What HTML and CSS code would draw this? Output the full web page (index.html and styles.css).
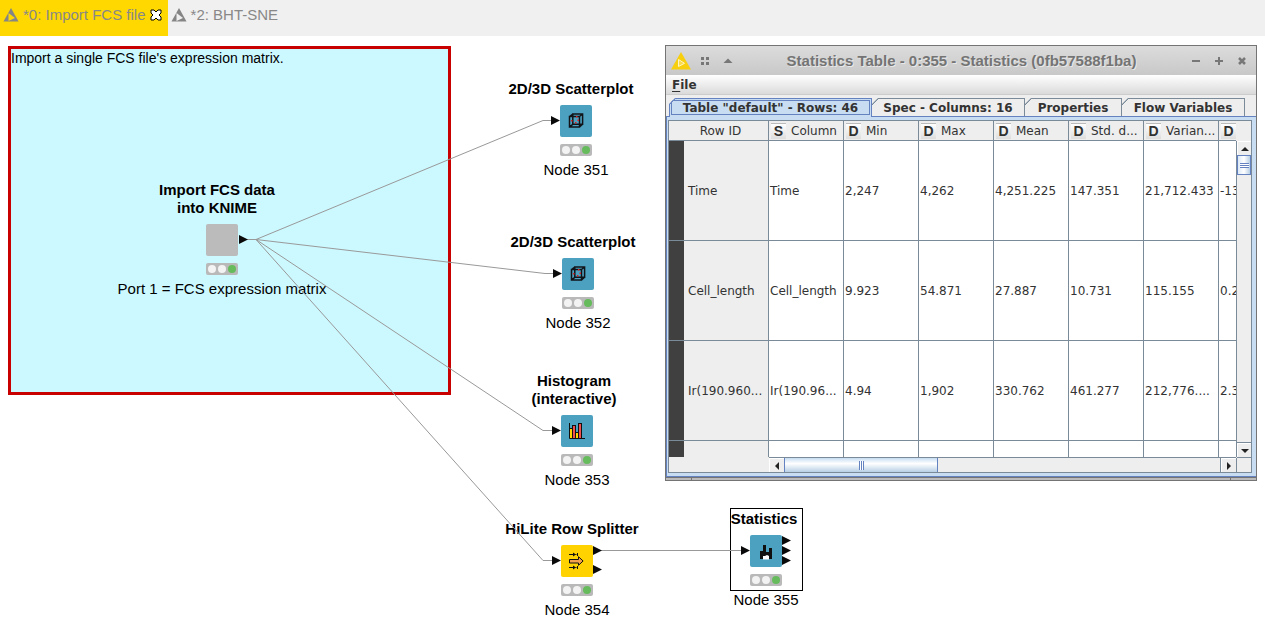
FILE: index.html
```html
<!DOCTYPE html>
<html lang="en">
<head>
<meta charset="utf-8">
<title>Import FCS file</title>
<link rel="stylesheet" href="styles.css">
</head>
<body>
<svg class="defs" aria-hidden="true">
  <symbol id="knime" viewBox="0 0 16 14"><path d="M8 0 15.5 13.5H.5Z" fill="#858585"/><path d="M5.500 5v8l6.500-3z" fill="var(--hole)"/></symbol>
  <symbol id="cube" viewBox="0 0 32 32"><path d="M9.5 11.5h10v10.5h-10zM12.8 9h9.8v10.3h-9.8zM9.5 11.5 12.8 9M19.5 11.5 22.6 9M19.5 22l3.1-2.7M9.5 22l3.3-2.7" fill="none" stroke="#101418" stroke-width="1.500"/><g fill="#e02020"><rect x="11" y="15" width="1.5" height="1.5"/><rect x="15" y="17" width="1.5" height="1.5"/><rect x="17.5" y="14.5" width="1.5" height="1.5"/><rect x="16" y="11" width="1.5" height="1.5"/></g></symbol>
</svg>
<header class="editor-tabs">
  <button class="editor-tab current"><svg class="tab-icon"><use href="#knime"/></svg>*0: Import FCS file
    <svg class="tab-close" viewBox="0 0 12 12"><path d="M1 1h3l2 2 2-2h3v3L9 6l2 2v3H8L6 9l-2 2H1V8l2-2-2-2z" fill="#fff" stroke="#000"/></svg></button>
  <button class="editor-tab"><svg class="tab-icon"><use href="#knime"/></svg>*2: BHT-SNE</button>
</header>
<main class="canvas">
  <div class="annotation">Import a single FCS file's expression matrix.</div>

  <section class="node n-import">
    <h2>Import FCS data<br>into KNIME</h2>
    <div class="body meta"></div>
    <div class="lights"><i></i><i></i><i></i></div>
    <p>Port 1 = FCS expression matrix</p>
  </section>
  <section class="node n351">
    <h2>2D/3D Scatterplot</h2>
    <div class="body"><svg><use href="#cube"/></svg></div>
    <div class="lights"><i></i><i></i><i></i></div>
    <p>Node 351</p>
  </section>
  <section class="node n352">
    <h2>2D/3D Scatterplot</h2>
    <div class="body"><svg><use href="#cube"/></svg></div>
    <div class="lights"><i></i><i></i><i></i></div>
    <p>Node 352</p>
  </section>
  <section class="node n353">
    <h2>Histogram<br>(interactive)</h2>
    <div class="body"><svg viewBox="0 0 32 32"><path d="M8 13h4v10H8zM14 17h4v6h-4zM11 10h4v13h-4zM17 8h4v15h-4z" fill="#101010"/><path d="M9 14h2v9H9zM15 18h2v5h-2z" fill="#ffd500"/><path d="M12 11h2v12h-2zM18 9h2v14h-2z" fill="#f05050"/><path d="M8.500 8v15.500H24" fill="none" stroke="#101010"/></svg></div>
    <div class="lights"><i></i><i></i><i></i></div>
    <p>Node 353</p>
  </section>
  <section class="node n354">
    <h2>HiLite Row Splitter</h2>
    <div class="body manip"><svg viewBox="0 0 32 32"><path d="M8.5 14.5h9v-2.8l4.6 4.3-4.6 4.3v-2.3h-9z" fill="#f3a04e" stroke="#101010"/><path d="M8 9.5h5M16.5 8v3M8 22.5h5M16.5 21v3M14.5 9.5h1M14.5 22.5h1" stroke="#101010"/><path d="M12 7.5 15 9.5l-3 2zM12 20.5l3 2-3 2z" fill="#101010"/></svg></div>
    <div class="lights"><i></i><i></i><i></i></div>
    <p>Node 354</p>
  </section>
  <div class="selection"></div>
  <section class="node n355">
    <h2>Statistics</h2>
    <div class="body"><svg viewBox="0 0 32 32"><path d="M13 20h6v4.5h-6z" fill="#fff"/><path d="M10 16h3v-6h3v7h3v-4h3v11h-3v-3l-2-1-2 1-2 0v3h-3z" fill="#101010"/></svg></div>
    <div class="lights"><i></i><i></i><i></i></div>
    <p>Node 355</p>
  </section>

  <svg class="wires" aria-hidden="true">
    <g fill="none" stroke="#999">
      <path d="M247 203.5h9L543 84.5h9M256 203.5l289 34h9M256 203.5l287 191h9M256 203.5l287 321h9M601 514.5h141"/>
    </g>
    <g fill="#0a0a0a">
      <path d="M239 199l9 4.500-9 4.500zM551 80l9 4.500-9 4.500zM553 233l9 4.500-9 4.500zM552 390l9 4.500-9 4.500zM552 520l9 4.500-9 4.500zM593 510l9 4.500-9 4.500zM593 529l9 4.500-9 4.500zM741 510l9 4.500-9 4.500zM782 500l9 4.500-9 4.500zM782 510l9 4.500-9 4.500zM782 520l9 4.500-9 4.500z"/>
    </g>
  </svg>

  <section class="window">
    <div class="titlebar">
      <svg class="app-icon" viewBox="0 0 20 18"><path d="M10 0 20 17.500H0Z" fill="#f7cf0c"/><path d="M7.500 7.500v7l6-3.200z" fill="#f9da4c" stroke="#fff6c0"/></svg>
      <svg class="tool" viewBox="0 0 10 10"><path d="M1 1h3v3H1zM6 1h3v3H6zM1 6h3v3H1zM6 6h3v3H6z" fill="#777"/></svg>
      <svg class="tool up" viewBox="0 0 10 10"><path d="M5 2.500 9.500 7h-9z" fill="#777"/></svg>
      <h1>Statistics Table - 0:355 - Statistics (0fb57588f1ba)</h1>
      <button aria-label="Minimize"><svg viewBox="0 0 10 10"><path d="M1 5h8" stroke="#777" stroke-width="2"/></svg></button>
      <button aria-label="Maximize"><svg viewBox="0 0 10 10"><path d="M1 5h8M5 1v8" stroke="#777" stroke-width="2"/></svg></button>
      <button aria-label="Close"><svg viewBox="0 0 10 10"><path d="M2 2l6 6M8 2 2 8" stroke="#777" stroke-width="2.500"/></svg></button>
    </div>
    <nav class="menubar"><button><u>F</u>ile</button></nav>
    <div class="tabs">
      <button class="tab active">Table "default" - Rows: 46</button>
      <button class="tab">Spec - Columns: 16</button>
      <button class="tab">Properties</button>
      <button class="tab">Flow Variables</button>
    </div>
    <div class="pane">
      <div class="grid">
        <div class="view">
          <table>
            <colgroup><col class="c-id"><col class="c"><col class="c"><col class="c"><col class="c"><col class="c"><col class="c"><col class="c"></colgroup>
            <thead><tr><th>Row ID</th><th><b>S</b>Column</th><th><b>D</b>Min</th><th><b>D</b>Max</th><th><b>D</b>Mean</th><th><b>D</b>Std. d...</th><th><b>D</b>Varian...</th><th><b>D</b></th></tr></thead>
            <tbody>
              <tr><th>Time</th><td>Time</td><td>2,247</td><td>4,262</td><td>4,251.225</td><td>147.351</td><td>21,712.433</td><td>-13</td></tr>
              <tr><th>Cell_length</th><td>Cell_length</td><td>9.923</td><td>54.871</td><td>27.887</td><td>10.731</td><td>115.155</td><td>0.2</td></tr>
              <tr><th>Ir(190.960...</th><td>Ir(190.96...</td><td>4.94</td><td>1,902</td><td>330.762</td><td>461.277</td><td>212,776....</td><td>2.3</td></tr>
              <tr><th></th><td></td><td></td><td></td><td></td><td></td><td></td><td></td></tr>
            </tbody>
          </table>
        </div>
        <div class="vbar">
          <button aria-label="Scroll up"><svg viewBox="0 0 8 4"><path d="M4 0l4 4H0z"/></svg></button>
          <div class="thumb"></div>
          <button class="end" aria-label="Scroll down"><svg viewBox="0 0 8 4"><path d="M4 4 0 0h8z"/></svg></button>
        </div>
        <div class="hbar">
          <button aria-label="Scroll left"><svg class="side" viewBox="0 0 4 8"><path d="M0 4l4-4v8z"/></svg></button>
          <div class="thumb"></div>
          <button class="end" aria-label="Scroll right"><svg class="side" viewBox="0 0 4 8"><path d="M4 4 0 8V0z"/></svg></button>
        </div>
      </div>
    </div>
    <div class="resize"></div>
  </section>
</main>
</body>
</html>
```
FILE: styles.css
```css
* { box-sizing: border-box; }
body { margin: 0; height: 100vh; display: flex; flex-direction: column; overflow: hidden; background: #fff; color: #000; font: 15px/18px "Liberation Sans", Arial, sans-serif; }
button { margin: 0; padding: 0; border: 0; background: none; font: inherit; color: inherit; }
svg { display: block; }
.defs { position: absolute; width: 0; height: 0; }

.editor-tabs { display: flex; flex: none; height: 36px; background: #f0f0f0; }
.editor-tab { --hole: #f0f0f0; display: flex; align-items: center; height: 36px; padding: 0 6px 6px 3px; color: #888; white-space: nowrap; }
.editor-tab.current { --hole: #ffd800; background: #ffd800; }
.tab-icon { width: 16px; height: 14px; margin-right: 4px; }
.tab-close { width: 12px; height: 12px; margin-left: 4px; }

.canvas { position: relative; flex: 1; min-height: 0; overflow: hidden; }
.annotation { position: absolute; left: 8px; top: 10px; width: 443px; height: 349px; border: 3px solid #c80000; background: #ccf8ff; font-size: 14px; line-height: 18px; }
.wires { position: absolute; left: 0; top: 0; width: 100%; height: 100%; }

.node { position: absolute; width: 220px; display: flex; flex-direction: column; align-items: center; text-align: center; }
.node h2 { margin: 0 0 7px; padding-right: 10px; font-size: 15px; line-height: 18px; font-weight: bold; }
.node p { margin: 5px 0 0; }
.body { width: 32px; height: 32px; border-radius: 2px; background: #4ca0c0; }
.body svg { width: 32px; height: 32px; }
.body.meta { background: #bbb; }
.body.manip { background: #ffd200; }
.lights { display: flex; align-items: center; justify-content: center; gap: 2px; width: 32px; height: 12px; margin-top: 7px; border-radius: 2px; background: #b9b9b9; }
.lights i { width: 8px; height: 8px; border-radius: 50%; background: #f3f3f3; }
.lights i:last-child { background: #66bb5c; }
.n-import { left: 112px; top: 145px; }
.n351 { left: 466px; top: 44px; }
.n352 { left: 468px; top: 197px; }
.n353 { left: 467px; top: 336px; }
.n354 { left: 467px; top: 484px; }
.n355 { left: 656px; top: 474px; }
.n353 h2 { padding-right: 6px; }
.n355 h2 { padding-right: 4px; }
.selection { position: absolute; left: 730px; top: 472px; width: 73px; height: 83px; border: 1px solid #000; }

.window { position: absolute; left: 665px; top: 9px; width: 592px; border: 1px solid #747474; background: #eee; color: #333; font: 12px/16px "DejaVu Sans", sans-serif; }
.titlebar { display: flex; align-items: center; height: 29px; padding: 0 9px 0 5px; background: linear-gradient(#dcdcdc, #c8c8c8); }
.app-icon { width: 20px; height: 18px; }
.tool { width: 10px; height: 10px; margin-left: 9px; }
.tool.up { margin-left: 13px; }
.titlebar h1 { flex: 1; margin: 0; padding-left: 12px; text-align: center; font: bold 15px/18px "Liberation Sans", Arial, sans-serif; color: #747474; text-shadow: 1px 1px #e8e8e8; white-space: nowrap; }
.titlebar button { margin-left: 13px; }
.titlebar button svg { width: 10px; height: 10px; }
.menubar { height: 20px; padding: 2px 6px; border-bottom: 1px solid #ccc; background: linear-gradient(#fff, #dadada); font-weight: bold; }
.menubar u { text-underline-offset: 2px; }
.tabs { display: grid; grid-template-columns: 203px 153px 97px 123px; height: 21px; padding: 3px 0 0 3px; }
.tab { position: relative; height: 18px; padding: 0; border: solid #7a8a99; border-width: 1px 1px 0 0; font-weight: bold; line-height: 16px; white-space: nowrap; background: linear-gradient(135deg, #7a8a99 5px, #eee 5px); background-origin: border-box; clip-path: polygon(6px 0, 100% 0, 100% 100%, 0 100%, 0 6px); }
.tab.active { height: 19px; padding-bottom: 1px; border-color: #6382bf; border-left: 1px solid #6382bf; background: linear-gradient(135deg, #6382bf 5px, #c8ddf2 5px); background-origin: border-box; outline: 1px solid #6382bf; outline-offset: -3px; }
.pane { padding: 3px 4px 3px 1px; border: 1px solid #6382bf; border-right-width: 0; background: #c8ddf2; }
.grid { display: grid; grid-template-columns: minmax(0, 1fr) 15px; grid-template-rows: 336px 15px; border: 1px solid #7a8a99; background: #eee; }
.view { overflow: hidden; }
table { width: 625px; table-layout: fixed; border-collapse: separate; border-spacing: 0; }
.c-id { width: 100px; }
.c { width: 75px; }
th, td { padding: 0 0 0 1px; border: solid #7a8a99; border-width: 0 1px 1px 0; font-weight: normal; text-align: left; white-space: nowrap; overflow: hidden; }
td { height: 100px; background: #fff; }
thead th { height: 20px; padding: 0 0 0 2px; background: #eee; }
thead th:first-child { padding-left: 4px; text-align: center; }
tbody th { padding-left: 19px; background: linear-gradient(90deg, #404040 15px, #eee 15px); }
thead b { display: inline-block; width: 15px; height: 16px; margin-right: 5px; border-top: 1px solid #bbb; background: linear-gradient(#fff, #ddd); color: #303030; font: bold 14px/15px "Liberation Sans", Arial, sans-serif; text-align: center; vertical-align: top; }
.vbar { display: flex; flex-direction: column; margin-top: 20px; border-left: 1px solid #7a8a99; }
.hbar { display: flex; margin-left: 100px; border-top: 1px solid #7a8a99; }
.vbar button, .hbar button { display: flex; align-items: center; justify-content: center; width: 14px; height: 14px; background: #eee; border: solid #fff; border-width: 1px 0 0 1px; }
.grid button svg { width: 8px; height: 4px; fill: #222; }
.grid button svg.side { width: 4px; height: 8px; }
.hbar button { width: 15px; }
.vbar .thumb { display: flex; align-items: center; justify-content: center; height: 20px; border: 1px solid #6382bf; background: linear-gradient(90deg, #dceaf7, #fff, #b8cfe5); }
.vbar .thumb::before { content: ""; width: 9px; height: 5px; background: repeating-linear-gradient(#6382bf 0 1px, #fff 1px 2px); }
.hbar .thumb { display: flex; align-items: center; justify-content: center; width: 154px; border: solid #6382bf; border-width: 0 1px; background: linear-gradient(#c8ddf2, #fff 40%, #b8cfe5); }
.hbar .thumb::before { content: ""; width: 5px; height: 9px; background: repeating-linear-gradient(90deg, #6382bf 0 1px, #fff 1px 2px); }
.vbar .end { margin-top: auto; box-shadow: 0 -1px #7a8a99, 0 1px #7a8a99; }
.hbar .end { margin-left: auto; box-shadow: -1px 0 #7a8a99, 1px 0 #7a8a99; }
.resize { height: 3px; margin: 0; border-top: 1px solid #747474; background: linear-gradient(#747474, #747474) 25px 0 / 1px 3px no-repeat, linear-gradient(#747474, #747474) 564px 0 / 1px 3px no-repeat, #bbb; }
```
